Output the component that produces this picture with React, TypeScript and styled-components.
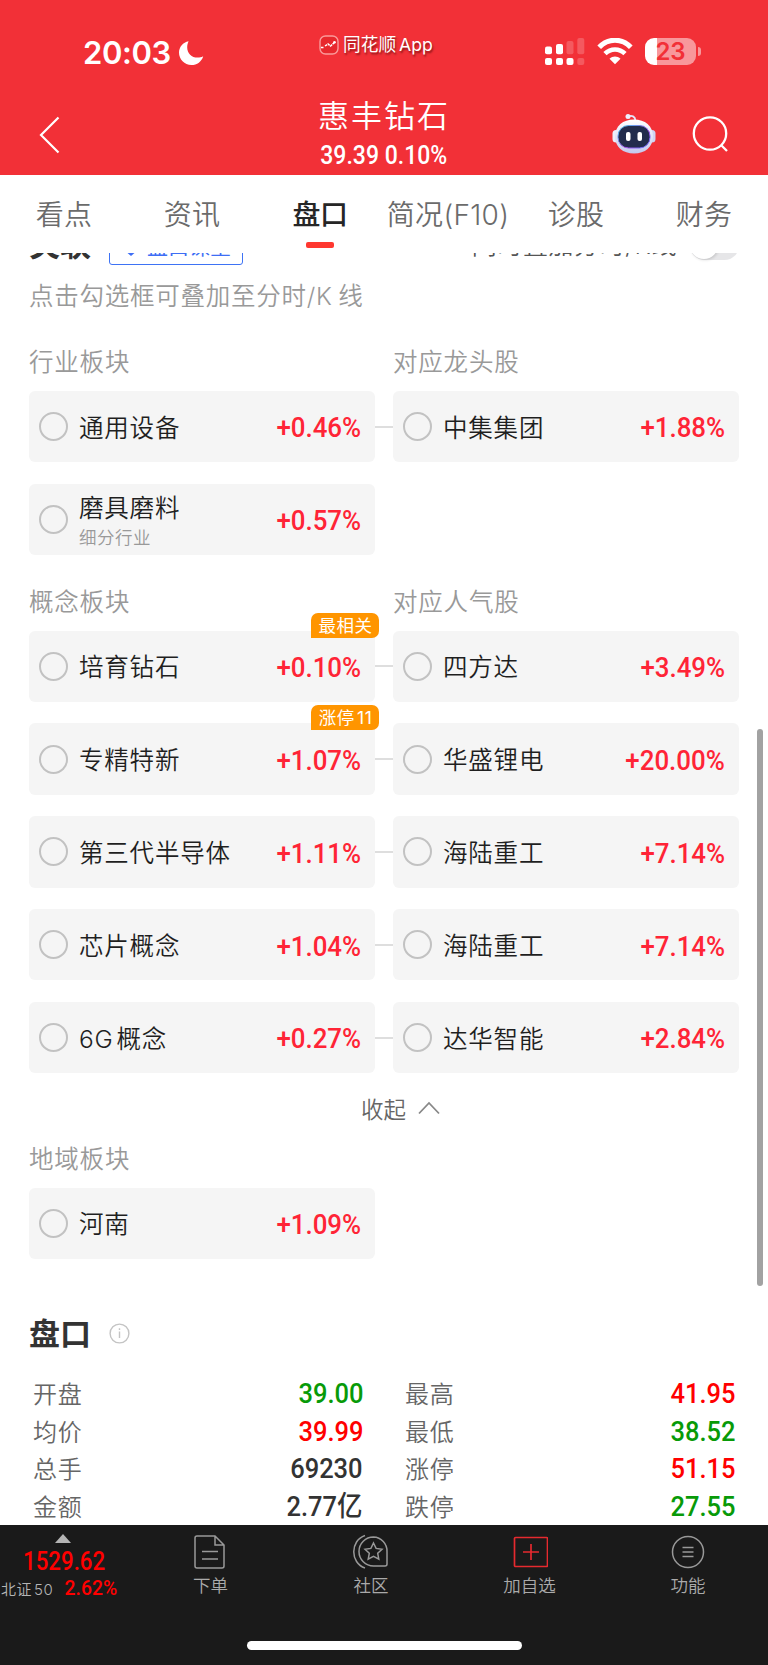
import React from "react";
import styled, { createGlobalStyle, css } from "styled-components";

const Global = createGlobalStyle`
  * { box-sizing: border-box; }
  body { margin: 0; background: #fff; }
`;

const cjk = `Inter, "Noto Sans CJK SC", sans-serif`;
const numeric = `Roboto, "Noto Sans CJK SC", sans-serif`;

const Screen = styled.div`
  width: 768px;
  height: 1665px;
  display: flex;
  flex-direction: column;
  overflow: hidden;
  background: #fff;
  font-family: ${cjk};
  font-weight: 350;
  color: #262626;
  white-space: nowrap;
`;

const Header = styled.header`
  height: 174.5px;
  flex: none;
  background: #f23037;
  color: #fff;
`;

const StatusBar = styled.div`
  height: 94px;
  display: grid;
  grid-template-columns: 319px 1fr 223px;
  padding-top: 30px;
`;

const Clock = styled.div`
  display: flex;
  align-items: center;
  gap: 7px;
  height: 45px;
  padding-left: 83px;
  font: 600 31px/45px Inter, sans-serif;
  letter-spacing: -0.4px;
`;

const AppName = styled.div`
  display: flex;
  align-items: center;
  gap: 4px;
  height: 30px;
  font-size: 17.7px;
  font-weight: 400;
  line-height: 30px;
  text-shadow: 1px 2px 2px rgba(70, 0, 0, 0.6);

  span { word-spacing: -2px; }
`;

const StatusIcons = styled.div`
  display: flex;
  align-items: flex-start;
  padding-top: 8px;
`;

const TitleBar = styled.div`
  height: 80px;
  display: grid;
  grid-template-columns: 200px 1fr 200px;
`;

const BackSlot = styled.div`
  padding: 22px 0 0 39px;
`;

const StockTitle = styled.div`
  display: flex;
  flex-direction: column;
  align-items: center;
`;

const StockName = styled.div`
  height: 43px;
  font-size: 31px;
  line-height: 43px;
  letter-spacing: 2px;
`;

const StockQuote = styled.div`
  font: 500 26px/36px ${numeric};
  transform: scaleX(0.885);
`;

const TitleActions = styled.div`
  display: flex;
  align-items: flex-start;
  padding: 19px 0 0 44px;
  gap: 36px;
`;

const Tabs = styled.nav`
  height: 78.5px;
  flex: none;
  display: grid;
  grid-template-columns: repeat(6, 128px);
`;

const Tab = styled.div<{ $active?: boolean }>`
  display: flex;
  flex-direction: column;
  align-items: center;
  padding-top: 20.5px;
  font-size: 28px;
  line-height: 40px;
  letter-spacing: 0.3px;
  color: #6b6b6b;
  ${(p) =>
    p.$active &&
    css`
      color: #262626;
      font-weight: 500;
      letter-spacing: -0.5px;
      &::after {
        content: "";
        width: 28px;
        height: 6px;
        margin-top: 7px;
        border-radius: 2px;
        background: #ff3830;
      }
    `}
`;

const Viewport = styled.main`
  height: 1272px;
  flex: none;
  display: flex;
  align-items: flex-start;
  overflow: hidden;
`;

const Content = styled.div`
  width: 739px;
  margin-top: -28px;
  padding-left: 29px;
`;

const Thumb = styled.div`
  width: 6px;
  height: 557px;
  margin: 476px 0 0 18px;
  border-radius: 3px;
  background: #a2a2a2;
`;

const RelatedHead = styled.div`
  height: 40px;
  display: flex;
  align-items: center;
`;

const SectionTitle = styled.h2`
  margin: 0;
  font-size: 31px;
  line-height: 40px;
  font-weight: 600;
  color: #333;
`;

const LessonButton = styled.div`
  display: flex;
  align-items: center;
  gap: 9px;
  width: 134px;
  height: 39px;
  margin-left: 18px;
  padding-left: 14px;
  border: 1px solid #3e73f5;
  border-radius: 3px;
  font-size: 21px;
  font-weight: 400;
  color: #3e6ef5;

  svg { margin-top: 5px; }
`;

const OverlayLabel = styled.div`
  margin-left: auto;
  margin-right: 13px;
  font-size: 25px;
  line-height: 40px;
  letter-spacing: 0.6px;
  color: #555;
`;

const Toggle = styled.div`
  width: 49px;
  height: 29px;
  border-radius: 15px;
  background: #e6e6e8;

  &::before {
    content: "";
    display: block;
    width: 28px;
    height: 28px;
    border-radius: 50%;
    background: #fff;
    box-shadow: 1px 1px 3px rgba(0, 0, 0, 0.15);
  }
`;

const Hint = styled.p`
  margin: 12px 0 0;
  height: 38px;
  font-size: 24.5px;
  line-height: 39px;
  letter-spacing: 0.75px;
  word-spacing: -2px;
  color: #999;
`;

const Headings = styled.div<{ $top: number; $height: number }>`
  display: grid;
  grid-template-columns: 346px 346px;
  column-gap: 18px;
  margin-top: ${(p) => p.$top}px;
  height: ${(p) => p.$height}px;
  font-size: 24.5px;
  line-height: 38px;
  letter-spacing: 0.8px;
  color: #999;
`;

const Rows = styled.div`
  display: grid;
  row-gap: 21.6px;
`;

const PairRow = styled.div`
  display: grid;
  grid-template-columns: 346px 18px 346px;
  align-items: center;
  height: 71.25px;
`;

const Link = styled.div`
  height: 2px;
  background: #dedede;
`;

const Card = styled.div`
  position: relative;
  display: flex;
  align-items: center;
  height: 100%;
  padding: 0 15px 0 10px;
  border-radius: 6px;
  background: #f5f5f5;
`;

const Check = styled.span`
  width: 29px;
  height: 29px;
  flex: none;
  border: 2px solid #c2c2c2;
  border-radius: 50%;
`;

const Names = styled.div`
  margin-left: 11px;
  padding-top: 2px;
  flex: 1;
`;

const Name = styled.div<{ $tight?: boolean }>`
  font-size: 24.5px;
  line-height: ${(p) => (p.$tight ? 32 : 36)}px;
  padding-top: ${(p) => (p.$tight ? 2 : 0)}px;
  letter-spacing: 0.8px;
  color: #1f1f1f;
`;

const Latin = styled.span`
  margin-right: 3px;
`;

const SubName = styled.div`
  font-size: 17.5px;
  line-height: 27px;
  letter-spacing: 0.5px;
  color: #999;
`;

const Change = styled.div`
  font: 500 27.5px/36px ${numeric};
  padding-top: 3.5px;
  margin-right: -1px;
  color: #ff2436;
  transform: scaleX(0.94);
  transform-origin: right;
`;

const Badge = styled.span`
  position: absolute;
  right: -4px;
  top: -18px;
  width: 68px;
  height: 25px;
  border-radius: 7px 7px 7px 0;
  background: #ff9500;
  color: #fff;
  font-size: 17.5px;
  font-weight: 400;
  line-height: 25px;
  letter-spacing: 0.5px;
  word-spacing: -3px;
  padding-left: 1px;
  text-align: center;
`;

const Collapse = styled.div`
  display: flex;
  align-items: center;
  height: 40px;
  margin-top: 15px;
  padding-left: 332px;
  gap: 12px;
  font-size: 22.5px;
  color: #666;
`;

const BoardTitle = styled.div`
  display: flex;
  align-items: center;
  gap: 18px;
  height: 40px;
  margin-top: 55px;
`;

const Quotes = styled.div`
  display: grid;
  grid-template-columns: 330px 330px;
  column-gap: 42px;
  margin: 22px 0 0 4px;
`;

const QuoteRow = styled.div`
  display: flex;
  justify-content: space-between;
  height: 37.6px;
  font-size: 24px;
  line-height: 38px;
  letter-spacing: 0.8px;
  color: #666;
`;

const tones = { up: "#ff0000", down: "#089a08", flat: "#333333" };
type Tone = keyof typeof tones;

const QuoteValue = styled.span<{ $tone: Tone }>`
  font: 500 28px/36px ${numeric};
  letter-spacing: 0;
  color: ${(p) => tones[p.$tone]};
  transform: scaleX(0.91);
  transform-origin: right;
`;

const Footer = styled.footer`
  height: 140px;
  flex: none;
  display: flex;
  flex-direction: column;
  align-items: center;
  background: #1a1a1a;
  color: #aaa;
`;

const FooterNav = styled.div`
  width: 100%;
  height: 116px;
  display: grid;
  grid-template-columns: 130px 161px 160px 157px 160px;
`;

const IndexCell = styled.div`
  display: flex;
  flex-direction: column;
  align-items: center;
  padding: 9px 5px 0 0;
`;

const IndexValue = styled.div`
  margin: 3px 0 0 4px;
  height: 28px;
  font: 500 25px/31px ${numeric};
  color: #ff0000;
  transform: scaleX(0.89);
`;

const IndexChange = styled.div`
  display: flex;
  align-items: baseline;
  justify-content: space-between;
  align-self: flex-start;
  width: 117px;
  padding-left: 1px;
  height: 28px;
  font-size: 15px;
  line-height: 28px;
  letter-spacing: 0.5px;
  color: #b5b5b5;

  i {
    font-style: normal;
    margin-left: 2px;
  }

  b {
    font: 500 21px/28px ${numeric};
    letter-spacing: 0;
    color: #ff0000;
    transform: scaleX(0.92);
    transform-origin: right;
  }
`;

const NavItem = styled.div`
  display: flex;
  flex-direction: column;
  align-items: center;
  padding-top: 8px;
  font-size: 17.5px;
  line-height: 28px;

  svg { margin-bottom: 3px; }
`;

const HomeBar = styled.div`
  width: 275px;
  height: 9px;
  border-radius: 5px;
  background: #fff;
`;

interface Item {
  name: string;
  latin?: string;
  change: string;
  sub?: string;
  badge?: string;
}

const industry: Item[][] = [
  [{ name: "通用设备", change: "+0.46%" }, { name: "中集集团", change: "+1.88%" }],
  [{ name: "磨具磨料", change: "+0.57%", sub: "细分行业" }],
];

const concepts: Item[][] = [
  [{ name: "培育钻石", change: "+0.10%", badge: "最相关" }, { name: "四方达", change: "+3.49%" }],
  [{ name: "专精特新", change: "+1.07%", badge: "涨停 11" }, { name: "华盛锂电", change: "+20.00%" }],
  [{ name: "第三代半导体", change: "+1.11%" }, { name: "海陆重工", change: "+7.14%" }],
  [{ name: "芯片概念", change: "+1.04%" }, { name: "海陆重工", change: "+7.14%" }],
  [{ latin: "6G", name: "概念", change: "+0.27%" }, { name: "达华智能", change: "+2.84%" }],
];

const region: Item[][] = [[{ name: "河南", change: "+1.09%" }]];

const quotes: [string, string, Tone][] = [
  ["开盘", "39.00", "down"],
  ["最高", "41.95", "up"],
  ["均价", "39.99", "up"],
  ["最低", "38.52", "down"],
  ["总手", "69230", "flat"],
  ["涨停", "51.15", "up"],
  ["金额", "2.77亿", "flat"],
  ["跌停", "27.55", "down"],
];

const StockCard = ({ item }: { item: Item }) => (
  <Card>
    <Check />
    <Names>
      <Name $tight={!!item.sub}>
        {item.latin && <Latin>{item.latin}</Latin>}
        {item.name}
      </Name>
      {item.sub && <SubName>{item.sub}</SubName>}
    </Names>
    <Change>{item.change}</Change>
    {item.badge && <Badge>{item.badge}</Badge>}
  </Card>
);

const PairList = ({ pairs }: { pairs: Item[][] }) => (
  <Rows>
    {pairs.map(([left, right], i) => (
      <PairRow key={i}>
        <StockCard item={left} />
        {right && <Link />}
        {right && <StockCard item={right} />}
      </PairRow>
    ))}
  </Rows>
);

const Moon = () => (
  <svg width="26" height="26" viewBox="0 0 26 26">
    <path d="M10.6 1.2C5 2.200 1 7 1 12.600 1 19.500 6.500 25 13.400 25c5.600 0 10.400-3.500 11.800-8.800-1.800 1-3.600 1.400-5.600 1.400-6 0-10.400-4.600-10.400-10.200 0-2.300.5-4.300 1.400-6.200z" fill="#fff" />
  </svg>
);

const AppLogo = () => (
  <svg width="20" height="20" viewBox="0 0 20 20">
    <rect x="1" y="1" width="18" height="18" rx="5.500" fill="#e8282d" stroke="#fa9a9a" strokeWidth="1.400" />
    <path d="M2 12.500h3M6 11l3-2 2.500 2 4-3.500" fill="none" stroke="#fff" strokeWidth="1.500" strokeDasharray="2.500 .7" />
    <circle cx="15.500" cy="7.300" r="1.300" fill="#fff" />
  </svg>
);

const Signal = () => (
  <svg width="40" height="28" viewBox="0 0 40 28" fill="#fff">
    <rect x="0" y="8.500" width="7" height="7.700" rx="2" />
    <rect x="11" y="6" width="7" height="10.200" rx="2" />
    <rect x="21.500" y="3" width="7" height="13.200" rx="2" opacity=".2" />
    <rect x="32.300" y="0" width="7" height="16.200" rx="2" opacity=".2" />
    <rect x="0" y="20" width="7" height="7" rx="2" />
    <rect x="11" y="20" width="7" height="7" rx="2" />
    <rect x="21.500" y="20" width="7" height="7" rx="2" />
    <rect x="32.300" y="20" width="7" height="7" rx="2" opacity=".2" />
  </svg>
);

const Wifi = () => (
  <svg width="36" height="28" viewBox="0 0 36 28" fill="none" stroke="#fff" strokeWidth="5">
    <path d="M2.200 9.300C11-.2 25-.2 33.800 9.300" />
    <path d="M8 15.700c5.700-5.700 14.300-5.700 20 0" strokeWidth="4.600" />
    <path d="M12.500 20.800c3.200-3 7.800-3 11 0L18 26.300z" fill="#fff" stroke="none" />
  </svg>
);

const BatteryBox = styled.div`
  width: 51px;
  height: 27px;
  border-radius: 9px;
  background: linear-gradient(90deg, #fff 12px, #f8979b 12px);
  color: #f23037;
  font: 600 24px/27px Inter, sans-serif;
  text-align: center;
`;

const BatteryTip = styled.div`
  width: 3px;
  height: 9px;
  margin: 9px 0 0 1.5px;
  border-radius: 0 4px 4px 0;
  background: #f8979b;
`;

const StatusGlyph = styled.span`
  display: flex;
  margin-right: 12px;
`;

const Robot = () => (
  <svg width="44" height="42" viewBox="0 0 44 42">
    <defs>
      <linearGradient id="shell" x1="0" y1="0" x2="0" y2="1">
        <stop offset="0" stopColor="#ffffff" />
        <stop offset="1" stopColor="#c4c8ee" />
      </linearGradient>
      <linearGradient id="rim" x1="0" y1="0" x2="1" y2="1">
        <stop offset="0" stopColor="#43cdea" />
        <stop offset=".6" stopColor="#a64de8" />
        <stop offset="1" stopColor="#5c78ff" />
      </linearGradient>
    </defs>
    <path d="M16 3.500c4-1.500 7-.2 7.500 4" fill="none" stroke="#e4e6f8" strokeWidth="1.800" />
    <circle cx="16" cy="3.500" r="2.500" fill="#eef0ff" />
    <rect x="0.500" y="17" width="7" height="12.500" rx="3.500" fill="#eceefb" />
    <rect x="36.500" y="17" width="7" height="12.500" rx="3.500" fill="#cfd3f2" />
    <path d="M22 6.500c11 0 19 6.500 19 17s-8 17-19 17-19-6.500-19-17 8-17 19-17z" fill="url(#shell)" />
    <rect x="6" y="12.500" width="32" height="22.500" rx="10.500" fill="#222c4c" stroke="url(#rim)" strokeWidth="1" />
    <rect x="14" y="19" width="4.500" height="9" rx="2" fill="#fff" />
    <rect x="25.500" y="19" width="4.500" height="9" rx="2" fill="#fff" />
  </svg>
);

export default function App() {
  return (
    <>
      <Global />
      <Screen>
        <Header>
          <StatusBar>
            <Clock>
              20:03
              <Moon />
            </Clock>
            <AppName>
              <AppLogo />
              <span>同花顺 App</span>
            </AppName>
            <StatusIcons>
              <StatusGlyph><Signal /></StatusGlyph>
              <StatusGlyph><Wifi /></StatusGlyph>
              <BatteryBox>23</BatteryBox>
              <BatteryTip />
            </StatusIcons>
          </StatusBar>
          <TitleBar>
            <BackSlot>
              <svg width="21" height="38" viewBox="0 0 21 38" fill="none" stroke="#fff" strokeWidth="2.200">
                <path d="M19.500 1.500L2 19l17.500 17.500" />
              </svg>
            </BackSlot>
            <StockTitle>
              <StockName>惠丰钻石</StockName>
              <StockQuote>39.39 0.10%</StockQuote>
            </StockTitle>
            <TitleActions>
              <Robot />
              <svg width="38" height="40" viewBox="0 0 38 40" fill="none" stroke="#fff" strokeWidth="2.300">
                <circle cx="18" cy="20.500" r="16.200" />
                <path d="M29 32l6 6" />
              </svg>
            </TitleActions>
          </TitleBar>
        </Header>
        <Tabs>
          <Tab>看点</Tab>
          <Tab>资讯</Tab>
          <Tab $active>盘口</Tab>
          <Tab>简况(F10)</Tab>
          <Tab>诊股</Tab>
          <Tab>财务</Tab>
        </Tabs>
        <Viewport>
          <Content>
            <RelatedHead>
              <SectionTitle>关联</SectionTitle>
              <LessonButton>
                <svg width="14" height="16" viewBox="0 0 14 16" fill="#3e6ef5">
                  <path d="M0 0h14v10l-7 6-7-6z" />
                </svg>
                盘口课堂
              </LessonButton>
              <OverlayLabel>同时叠加分时/K线</OverlayLabel>
              <Toggle />
            </RelatedHead>
            <Hint>点击勾选框可叠加至分时/K 线</Hint>
            <Headings $top={28} $height={48}>
              <span>行业板块</span>
              <span>对应龙头股</span>
            </Headings>
            <PairList pairs={industry} />
            <Headings $top={27.5} $height={48}>
              <span>概念板块</span>
              <span>对应人气股</span>
            </Headings>
            <PairList pairs={concepts} />
            <Collapse>
              收起
              <svg width="22" height="14" viewBox="0 0 22 14" fill="none" stroke="#888" strokeWidth="1.800">
                <path d="M1 12.500L11 2l10 10.500" />
              </svg>
            </Collapse>
            <Headings $top={11.5} $height={48}>
              <span>地域板块</span>
            </Headings>
            <PairList pairs={region} />
            <BoardTitle>
              <SectionTitle>盘口</SectionTitle>
              <svg width="21" height="21" viewBox="0 0 21 21" fill="none" stroke="#c4c4c4" strokeWidth="1.400">
                <circle cx="10.500" cy="10.500" r="9.400" />
                <path d="M10.500 8.500v6.500M10.500 5.200v1.800" />
              </svg>
            </BoardTitle>
            <Quotes>
              {quotes.map(([label, value, tone]) => (
                <QuoteRow key={label + value}>
                  {label}
                  <QuoteValue $tone={tone}>{value}</QuoteValue>
                </QuoteRow>
              ))}
            </Quotes>
          </Content>
          <Thumb />
        </Viewport>
        <Footer>
          <FooterNav>
            <IndexCell>
              <svg width="16" height="9" viewBox="0 0 16 9" fill="#b5b5b5">
                <path d="M0 9L8 0l8 9z" />
              </svg>
              <IndexValue>1529.62</IndexValue>
              <IndexChange>
                <span>北证<i>50</i></span>
                <b>2.62%</b>
              </IndexChange>
            </IndexCell>
            <NavItem>
              <svg width="34" height="36" viewBox="0 0 34 36" fill="none" stroke="#999" strokeWidth="1.500">
                <path d="M21 3H3a2 2 0 0 0-2 2v28a2 2 0 0 0 2 2h25a2 2 0 0 0 2-2V12zM21 3v9H30M8 18.500h16M8 26h16" />
              </svg>
              下单
            </NavItem>
            <NavItem>
              <svg width="38" height="36" viewBox="0 0 38 36" fill="none" stroke="#999" strokeWidth="1.500">
                <path d="M13 2.500C-2 7.500-2 30 13 35" />
                <path d="M21.500 4a14.500 14.500 0 1 0 0 29H33a2 2 0 0 0 2-2V18.500A14 14 0 0 0 21.500 4z" />
                <path d="M21.500 10l2.600 5.400 5.900.8-4.300 4.100 1.100 5.900-5.300-2.800-5.300 2.800 1.100-5.900-4.300-4.100 5.900-.8z" />
              </svg>
              社区
            </NavItem>
            <NavItem>
              <svg width="36" height="36" viewBox="0 0 36 36" fill="none" stroke="#e62a2f" strokeWidth="1.700">
                <rect x="2.500" y="4.500" width="33" height="29" rx="1" />
                <path d="M11 19h16M19 11v16" />
              </svg>
              加自选
            </NavItem>
            <NavItem>
              <svg width="34" height="36" viewBox="0 0 34 36" fill="none" stroke="#999" strokeWidth="1.500">
                <circle cx="17" cy="19" r="15.500" />
                <path d="M11.500 14.500h11M11.500 19h11M11.500 23.500h11" />
              </svg>
              功能
            </NavItem>
          </FooterNav>
          <HomeBar />
        </Footer>
      </Screen>
    </>
  );
}
